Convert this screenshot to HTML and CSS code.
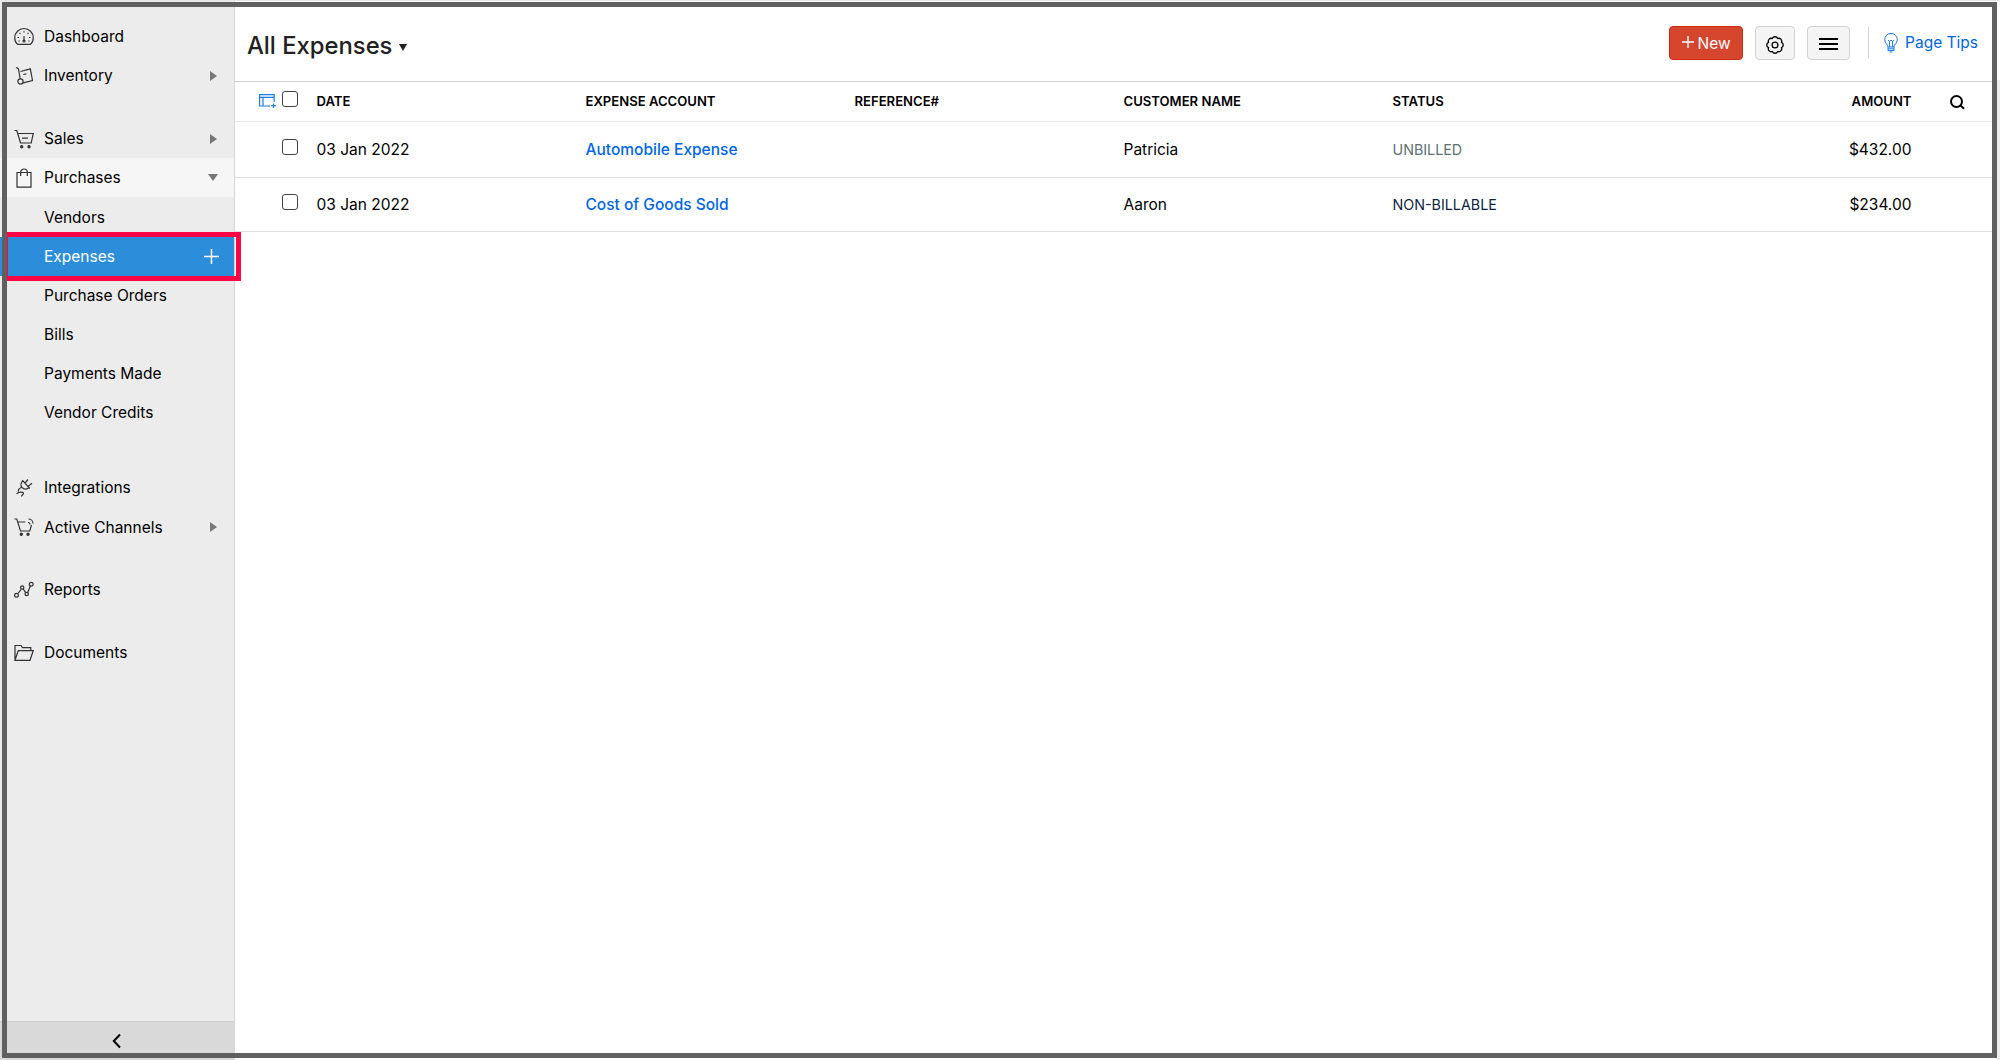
FILE: index.html
```html
<!DOCTYPE html>
<html lang="en">

<head>
    <meta charset="UTF-8">
    <meta name="viewport" content="width=device-width, initial-scale=1.0">
    <title>All Expenses</title>
    <link rel="stylesheet" href="styles.css">
</head>

<body>
    <div class="app">
        <!-- Sidebar -->
        <aside class="sidebar">
            <nav class="nav">
                <div class="nav-group">
                    <a class="nav-item">
                        <svg class="nav-icon" viewBox="0 0 20 20">
                            <path d="M3.6 17.4C1.8 16 .7 13.600.7 10.800A9.300 9.300 0 0 1 19.300 10.800C19.300 13.600 18.200 16 16.400 17.400Z" />
                            <path d="M10 9v5M10 4.200v1.400M5.500 6l.9.9M14.500 6l-.9.9M3.600 10.500h1.300M15.100 10.500h1.300M4.500 14h1.300M14.200 14h1.300" />
                            <circle cx="10" cy="14" r="1" />
                        </svg>
                        <span>Dashboard</span>
                    </a>
                    <a class="nav-item">
                        <svg class="nav-icon" viewBox="0 0 20 20">
                            <path d="M2 1.500l2.400 1.200 1.800 10.300M6.500 5.500l9.800-2.700 2.200 11.700-9.500 2.300M9.300 8.500l3-.7" />
                            <circle cx="6.500" cy="15.500" r="2.600" />
                        </svg>
                        <span>Inventory</span>
                        <i class="arrow"></i>
                    </a>
                </div>
                <div class="nav-group">
                    <a class="nav-item">
                        <svg class="nav-icon" viewBox="0 0 20 20">
                            <path d="M.5 1.500h2.300L6.500 14h10.700L19.300 4.500H3.800M8 9.200h6" />
                            <circle class="solid" cx="7.700" cy="17.700" r="1.100" />
                            <circle class="solid" cx="15" cy="17.700" r="1.100" />
                        </svg>
                        <span>Sales</span>
                        <i class="arrow"></i>
                    </a>
                    <a class="nav-item open">
                        <svg class="nav-icon" viewBox="0 0 20 20">
                            <path d="M3 4.500h14v14.700H3zM6.700 8V4.300a3.300 3.300 0 0 1 6.600 0V8" />
                        </svg>
                        <span>Purchases</span>
                        <i class="arrow down"></i>
                    </a>
                    <a class="nav-item sub">Vendors</a>
                    <a class="nav-item sub active">
                        <span>Expenses</span>
                        <svg class="add-icon" viewBox="0 0 15 15"><path d="M7.500 0v15M0 7.500h15" /></svg>
                        <i class="highlight"></i>
                    </a>
                    <a class="nav-item sub">Purchase Orders</a>
                    <a class="nav-item sub">Bills</a>
                    <a class="nav-item sub">Payments Made</a>
                    <a class="nav-item sub">Vendor Credits</a>
                </div>
                <div class="nav-group wide">
                    <a class="nav-item">
                        <svg class="nav-icon" viewBox="0 0 20 20">
                            <path d="M8.300 2.200l7.500 8.300M8.800 2.800C6.500 5 6.300 8 8.300 9.700s5 1.500 7-.2M11 5l3-3.500M14.300 8.300l3.700-3M7.700 9.300C4.500 10.700 3.700 12.500 4.500 13.800M2.500 16c1.500-2.300 7-2.600 7-.5 0 1.200-2 1.300-2 3" />
                        </svg>
                        <span>Integrations</span>
                    </a>
                    <a class="nav-item">
                        <svg class="nav-icon" viewBox="0 0 20 20">
                            <path d="M.5 2h2.300L6.500 14h9.300l1.700-6M3.800 5h7.500M14 5.500c1.500 0 2 .7 2 2M14.500 2c2.500 0 4.500 2 4.500 4.500" />
                            <circle class="solid" cx="7.300" cy="17.300" r="1.100" />
                            <circle class="solid" cx="14" cy="17.300" r="1.100" />
                        </svg>
                        <span>Active Channels</span>
                        <i class="arrow"></i>
                    </a>
                </div>
                <div class="nav-group">
                    <a class="nav-item">
                        <svg class="nav-icon" viewBox="0 0 20 20">
                            <path d="M4 13.500l3.200-4.200M9.300 9l2.400 3.700M13.700 12.500l2.800-7" />
                            <circle cx="2.500" cy="15.300" r="1.900" />
                            <circle cx="8.200" cy="7.500" r="1.700" />
                            <circle cx="12.700" cy="14" r="1.700" />
                            <circle cx="17.200" cy="4.200" r="1.900" />
                        </svg>
                        <span>Reports</span>
                    </a>
                </div>
                <div class="nav-group">
                    <a class="nav-item">
                        <svg class="nav-icon" viewBox="0 0 20 20">
                            <path d="M1 17V2.500h6l1.500 2.200h8.300v3M1 17.300L4.200 7.700h15L16 17.300z" />
                        </svg>
                        <span>Documents</span>
                    </a>
                </div>
            </nav>
            <div class="collapse">
                <svg viewBox="0 0 10 16"><path d="M8 1.500L1.800 8 8 14.500" /></svg>
            </div>
        </aside>

        <!-- Main content -->
        <main class="main">
            <header class="page-header">
                <h1>All Expenses</h1>
                <i class="caret"></i>
                <div class="actions">
                    <button class="btn btn-new">
                        <svg viewBox="0 0 12 12"><path d="M6 0v12M0 6h12" /></svg>
                        <span>New</span>
                    </button>
                    <button class="btn btn-gear">
                        <svg viewBox="0 0 18 18">
                            <path d="M15.470 11.680A2.900 2.900 0 0 1 11.680 15.470A2.900 2.900 0 0 1 6.320 15.470A2.900 2.900 0 0 1 2.530 11.680A2.900 2.900 0 0 1 2.530 6.320A2.900 2.900 0 0 1 6.320 2.530A2.900 2.900 0 0 1 11.680 2.530A2.900 2.900 0 0 1 15.470 6.320A2.900 2.900 0 0 1 15.470 11.680Z" />
                            <circle cx="9" cy="9" r="2.900" />
                        </svg>
                    </button>
                    <button class="btn btn-menu">
                        <svg viewBox="0 0 19 12"><path d="M0 1h19M0 6h19M0 11h19" /></svg>
                    </button>
                    <a class="page-tips">
                        <svg viewBox="0 0 14 20">
                            <path d="M4 14c0-3-3.300-3.500-3.300-7.300a6.300 6.300 0 0 1 12.600 0C13.300 10.500 10 11 10 14zM4 14v3.500h6V14M4 15.800h6M5.500 19h3M4 7l1.500 1.500L7 7l1.500 1.500L10 7M5.500 8.500V14M8.500 8.500V14" />
                        </svg>
                        <span>Page Tips</span>
                    </a>
                </div>
            </header>

            <div class="table">
                <div class="row head">
                    <div class="select">
                        <svg class="columns-icon" viewBox="0 0 17 14">
                            <path d="M11 12H.6V.6h14.600V8M.6 3.300h14.600M4 3.300V12M14.500 9.500V14M12.200 11.700h4.600" />
                        </svg>
                        <i class="checkbox"></i>
                    </div>
                    <div>DATE</div>
                    <div>EXPENSE ACCOUNT</div>
                    <div>REFERENCE#</div>
                    <div>CUSTOMER NAME</div>
                    <div>STATUS</div>
                    <div class="amount">AMOUNT</div>
                    <svg class="search-icon" viewBox="0 0 15 15">
                        <circle cx="6.500" cy="6.500" r="5.500" />
                        <path d="M10.300 10.300l3.700 3.500" />
                    </svg>
                </div>
                <div class="row">
                    <div class="select"><i class="checkbox"></i></div>
                    <div>03 Jan 2022</div>
                    <div class="account">Automobile Expense</div>
                    <div></div>
                    <div>Patricia</div>
                    <div class="status unbilled">UNBILLED</div>
                    <div class="amount">$432.00</div>
                </div>
                <div class="row last">
                    <div class="select"><i class="checkbox"></i></div>
                    <div>03 Jan 2022</div>
                    <div class="account">Cost of Goods Sold</div>
                    <div></div>
                    <div>Aaron</div>
                    <div class="status non-billable">NON-BILLABLE</div>
                    <div class="amount">$234.00</div>
                </div>
            </div>
        </main>
        <div class="scroll-track"></div>
        <div class="frame"></div>
    </div>
</body>

</html>
```

FILE: styles.css
```css
:root {
    --sidebar-bg: #ececec;
    --active-bg: #2c8edb;
    --link-color: #0066e8;
    --frame-color: #606060;
    --highlight-color: #ff0545;
}

* {
    margin: 0;
    padding: 0;
    box-sizing: border-box;
}

body {
    font-family: 'Inter', sans-serif;
    font-size: 15.5px;
    color: #000;
    background-color: #fff;
}

svg {
    fill: none;
    stroke: currentColor;
    flex: none;
}

.app {
    position: relative;
    display: flex;
    height: 1060px;
    overflow: hidden;
    border-top: 1px solid #e6e6e6;
}

/* Sidebar */
.sidebar {
    width: 235px;
    display: flex;
    flex-direction: column;
    background-color: var(--sidebar-bg);
    border-right: 1px solid #d6d6d6;
}

.nav {
    flex: 1;
    padding-top: 16px;
}

.nav-group {
    margin-bottom: 23.7px;
}

.nav-group.wide {
    padding-top: 12px;
}

.nav-item {
    position: relative;
    display: flex;
    align-items: center;
    height: 39.2px;
    padding: 0 16px 0 14px;
}

.nav-item.sub {
    padding-left: 44px;
}

.nav-item.open {
    background-color: #f6f6f6;
}

.nav-item.active {
    background-color: var(--active-bg);
    color: #fff;
}

.nav-icon {
    width: 20px;
    height: 20px;
    margin-right: 10px;
    stroke: #333;
    stroke-width: 1.2;
}

.nav-icon .solid {
    fill: #333;
}

.arrow {
    margin-left: auto;
    border-left: 7px solid #777;
    border-top: 5px solid transparent;
    border-bottom: 5px solid transparent;
    margin-right: 1px;
}

.arrow.down {
    border-top: 7px solid #777;
    border-left: 5px solid transparent;
    border-right: 5px solid transparent;
    border-bottom: 0;
    margin-right: 0;
}

.add-icon {
    width: 15px;
    height: 15px;
    margin-left: auto;
    margin-right: -1px;
    stroke-width: 1.5;
}

.highlight {
    position: absolute;
    left: 3px;
    top: -5px;
    width: 238px;
    height: 49px;
    border: 5px solid var(--highlight-color);
    z-index: 1;
}

.collapse {
    height: 39px;
    display: flex;
    align-items: center;
    justify-content: center;
    background-color: #d9d9d9;
    border-top: 1px solid #cfcfcf;
}

.collapse svg {
    width: 10px;
    height: 16px;
    stroke-width: 2;
}

/* Header */
.main {
    flex: 1;
}

.page-header {
    display: flex;
    align-items: center;
    height: 81px;
    padding: 0 22px 0 12px;
    border-bottom: 1px solid #cfcfcf;
}

h1 {
    font-size: 23.8px;
    font-weight: 500;
    color: #212121;
    padding-top: 8px;
}

.caret {
    margin: 12px 0 0 7px;
    border-top: 7px solid #212121;
    border-left: 4.5px solid transparent;
    border-right: 4.5px solid transparent;
}

.actions {
    display: flex;
    align-items: center;
    margin-left: auto;
    padding-top: 4px;
}

.btn {
    display: flex;
    align-items: center;
    justify-content: center;
    height: 34px;
    border: 1px solid #d2d2d2;
    border-radius: 4px;
    background-color: #f4f4f4;
    font: inherit;
}

.btn-new {
    width: 74px;
    color: #fff;
    background-color: #d6452e;
    border-color: #cc2a13;
    margin-right: 12px;
}

.btn-new svg {
    width: 12px;
    height: 12px;
    margin: -3px 4px 0 0;
    stroke-width: 1.4;
}

.btn-gear {
    width: 40px;
    margin-right: 12px;
}

.btn-gear svg {
    width: 18px;
    height: 18px;
    margin-top: 3px;
    stroke-width: 1.3;
    stroke-linejoin: round;
}

.btn-menu {
    width: 43px;
    margin-right: 18px;
}

.btn-menu svg {
    width: 19px;
    height: 12px;
    margin-top: 2px;
    stroke-width: 2;
}

.page-tips {
    display: flex;
    align-items: center;
    height: 32px;
    margin-top: -1px;
    padding-left: 15px;
    border-left: 1px solid #d2d2d2;
    color: var(--link-color);
}

.page-tips svg {
    width: 14px;
    height: 20px;
    margin-right: 7px;
    stroke: #1a7af0;
}

/* Expense list */
.row {
    display: grid;
    grid-template-columns: 81.5px 269px 269px 269px 269px 269px 250px 1fr;
    align-items: center;
    height: 56px;
    padding-bottom: 1px;
    border-bottom: 1px solid #dedede;
}

.row.last {
    height: 54px;
}

.row.head {
    height: 40px;
    font-size: 13.1px;
    font-weight: 600;
    border-bottom-color: #e8e8e8;
}

.select {
    display: flex;
    align-items: center;
    justify-content: flex-end;
    padding-right: 18.5px;
}

.columns-icon {
    width: 17px;
    height: 14px;
    margin-right: 6px;
    stroke: #1a7af0;
    stroke-width: 1.2;
}

.checkbox {
    width: 16px;
    height: 16px;
    margin-top: -4px;
    border: 1px solid #444;
    border-radius: 3px;
}

.account {
    color: var(--link-color);
    font-weight: 500;
}

.status {
    font-size: 14.3px;
}

.unbilled {
    color: #5c7272;
}

.non-billable {
    color: #101f3f;
}

.amount {
    text-align: right;
}

.search-icon {
    width: 15px;
    height: 15px;
    margin: 2px 0 0 38px;
    stroke-width: 2;
}

/* Window edges */
.scroll-track {
    position: absolute;
    top: 79px;
    right: 0;
    bottom: 0;
    width: 4px;
    background-color: #ededed;
}

.frame {
    position: absolute;
    inset: 1px 3px 2px 2px;
    border: 5px solid var(--frame-color);
    z-index: 2;
}
```
